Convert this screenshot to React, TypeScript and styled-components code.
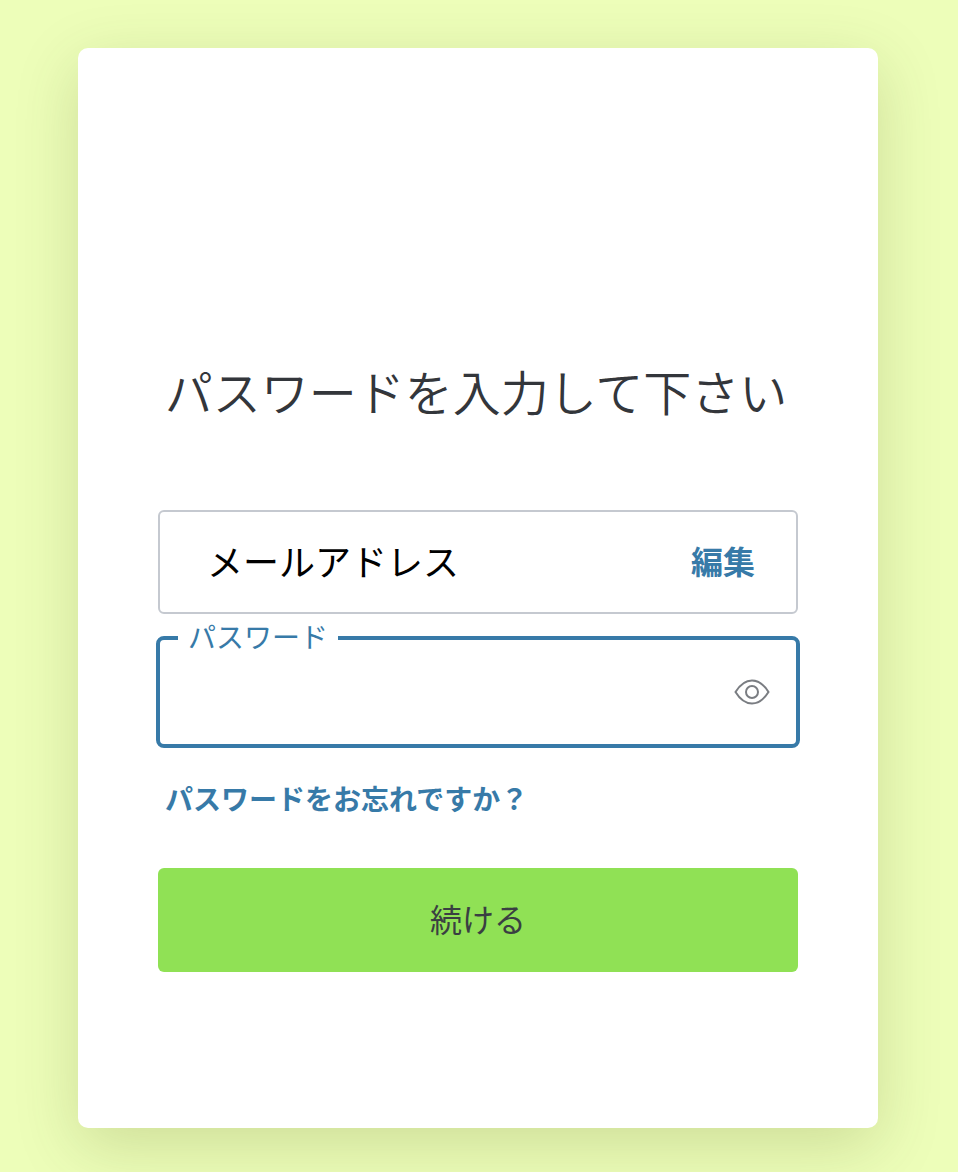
import React from 'react';
import styled, { createGlobalStyle } from 'styled-components';

const GlobalStyle = createGlobalStyle`
  html, body {
    margin: 0;
    padding: 0;
    background: #edfeb9;
  }
  body {
    font-family: "Noto Sans CJK JP", "Liberation Sans", sans-serif;
  }
`;

const Page = styled.div`
  box-sizing: border-box;
  width: 958px;
  height: 1172px;
  padding: 48px 80px 44px 78px;
  background: #edfeb9;
  overflow: hidden;
`;

const Card = styled.main`
  box-sizing: border-box;
  width: 800px;
  height: 1080px;
  padding: 308px 80px 0 80px;
  background: #ffffff;
  border-radius: 10px;
  box-shadow: 0 18px 64px 0 rgba(60, 70, 0, 0.18);
`;

const Title = styled.h1`
  margin: 0 0 86px -4px;
  height: 68px;
  font-size: 48px;
  line-height: 68px;
  font-weight: 350;
  color: #33363b;
  text-align: center;
  white-space: nowrap;
`;

const EmailBox = styled.div`
  box-sizing: border-box;
  display: flex;
  align-items: center;
  justify-content: space-between;
  height: 104px;
  padding: 0 41px 4px 47px;
  border: 2px solid #c5c9d0;
  border-radius: 6px;
`;

const EmailText = styled.span`
  font-size: 36px;
  color: #000000;
`;

const EditLink = styled.a`
  font-size: 32px;
  font-weight: 700;
  color: #377aa8;
`;

const PasswordField = styled.fieldset`
  box-sizing: border-box;
  display: flex;
  align-items: center;
  justify-content: flex-end;
  width: 644px;
  height: 126px;
  margin: 8px 0 0 -2px;
  padding: 0 26px 14px 0;
  border: 4px solid #377aa8;
  border-radius: 8px;
`;

const PasswordLabel = styled.legend`
  margin-left: 18px;
  padding: 0 10px 4px 10px;
  font-size: 28px;
  line-height: 28px;
  color: #377aa8;
`;

const EyeButton = styled.button`
  display: flex;
  padding: 0;
  border: 0;
  background: none;
`;

const ForgotLink = styled.a`
  display: block;
  margin: 28px 0 48px 7px;
  font-size: 28px;
  line-height: 44px;
  font-weight: 700;
  color: #377aa8;
`;

const SubmitButton = styled.button`
  display: block;
  width: 640px;
  height: 104px;
  padding: 0 0 4px 0;
  border: 0;
  border-radius: 6px;
  background: #90e155;
  font-family: inherit;
  font-size: 32px;
  color: #3a3f42;
`;

function EyeIcon() {
  return (
    <svg width="36" height="28" viewBox="0 0 36 28" fill="none" stroke="#7a7d82" strokeWidth="2">
      <path d="M1.5 14C5.5 7.500 11 2.500 18 2.500S30.500 7.500 34.500 14C30.500 20.500 25 25.500 18 25.500S5.500 20.500 1.500 14Z" />
      <circle cx="18" cy="14" r="6" />
    </svg>
  );
}

export default function App() {
  return (
    <>
      <GlobalStyle />
      <Page>
        <Card>
          <Title>パスワードを入力して下さい</Title>
          <EmailBox>
            <EmailText>メールアドレス</EmailText>
            <EditLink>編集</EditLink>
          </EmailBox>
          <PasswordField>
            <PasswordLabel>パスワード</PasswordLabel>
            <EyeButton type="button" aria-label="show password">
              <EyeIcon />
            </EyeButton>
          </PasswordField>
          <ForgotLink>パスワードをお忘れですか？</ForgotLink>
          <SubmitButton type="button">続ける</SubmitButton>
        </Card>
      </Page>
    </>
  );
}
